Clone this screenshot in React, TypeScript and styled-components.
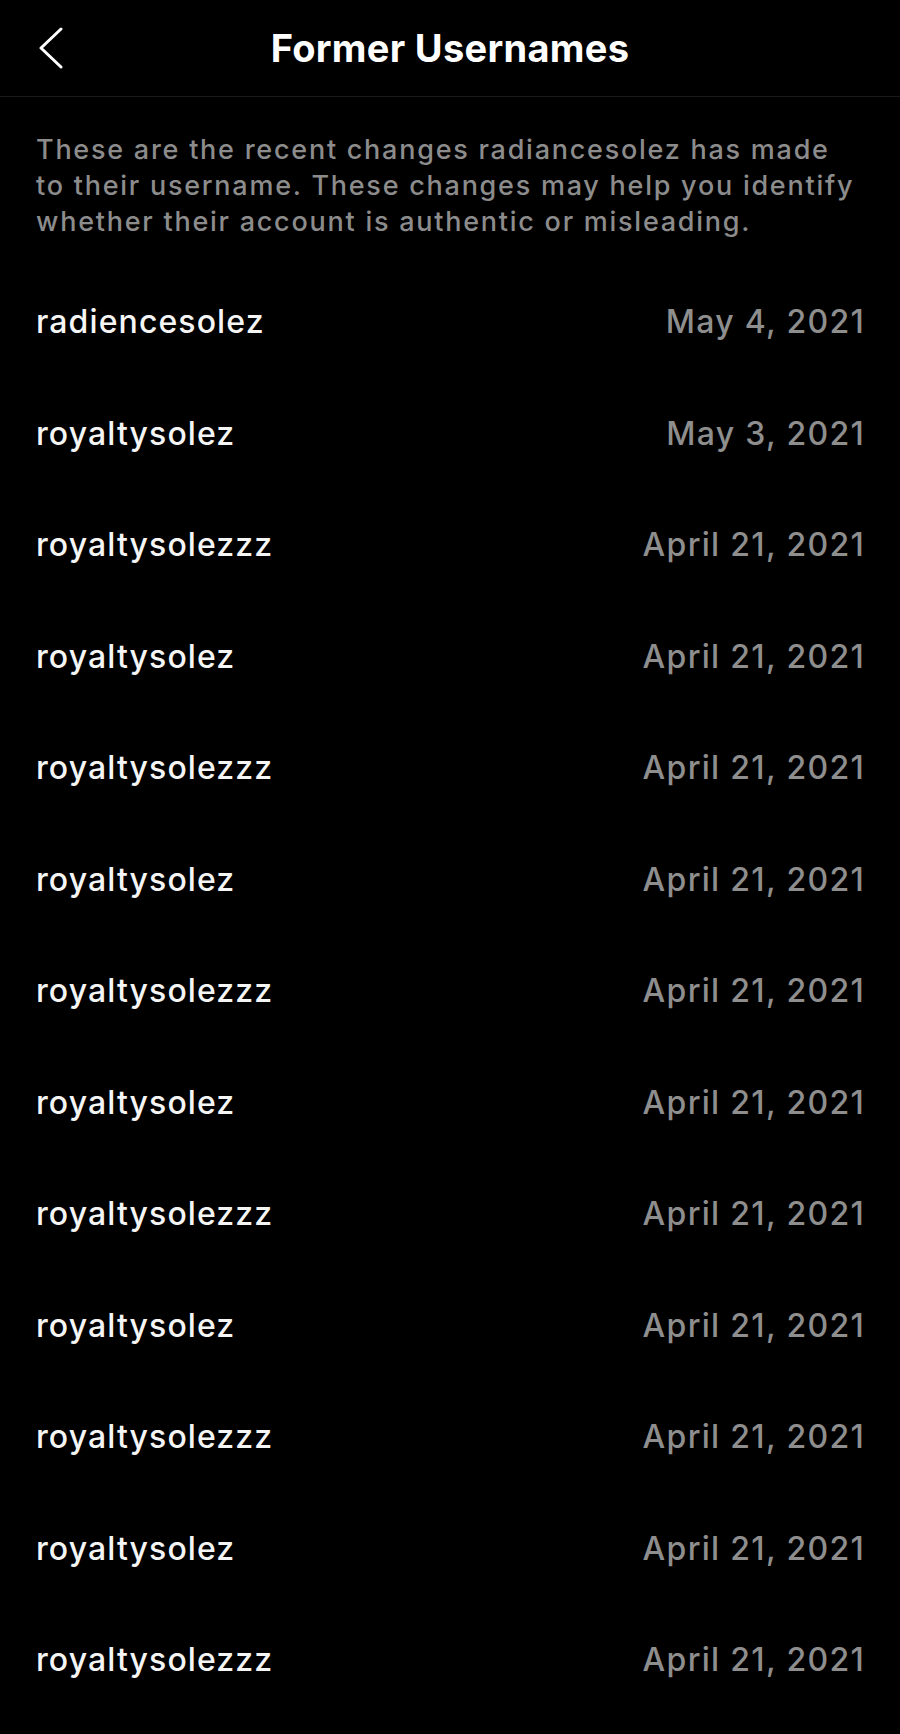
import { FC } from 'react';
import styled, { createGlobalStyle } from 'styled-components';

interface Change {
  username: string;
  date: string;
}

const changes: Change[] = [
  { username: 'radiencesolez', date: 'May 4, 2021' },
  { username: 'royaltysolez', date: 'May 3, 2021' },
  { username: 'royaltysolezzz', date: 'April 21, 2021' },
  { username: 'royaltysolez', date: 'April 21, 2021' },
  { username: 'royaltysolezzz', date: 'April 21, 2021' },
  { username: 'royaltysolez', date: 'April 21, 2021' },
  { username: 'royaltysolezzz', date: 'April 21, 2021' },
  { username: 'royaltysolez', date: 'April 21, 2021' },
  { username: 'royaltysolezzz', date: 'April 21, 2021' },
  { username: 'royaltysolez', date: 'April 21, 2021' },
  { username: 'royaltysolezzz', date: 'April 21, 2021' },
  { username: 'royaltysolez', date: 'April 21, 2021' },
  { username: 'royaltysolezzz', date: 'April 21, 2021' },
];

const GlobalStyle = createGlobalStyle`
  html, body {
    margin: 0;
    padding: 0;
    background: #000;
  }
  body {
    font-family: Inter, 'Liberation Sans', sans-serif;
  }
`;

const Screen = styled.div`
  width: 900px;
  min-height: 1734px;
  background: #000;
  color: #f5f5f5;
`;

const Header = styled.header`
  height: 96px;
  display: grid;
  grid-template-columns: 96px 1fr 96px;
  align-items: center;
  border-bottom: 1px solid #1a1a1a;
`;

const BackButton = styled.button`
  background: none;
  border: 0;
  padding: 0 0 0 38px;
  height: 100%;
  display: flex;
  align-items: center;
  color: #fff;
  cursor: pointer;
`;

const Title = styled.h1`
  margin: 0;
  text-align: center;
  font-size: 38px;
  font-weight: 700;
  letter-spacing: 0.3px;
  color: #fff;
`;

const Intro = styled.p`
  margin: 0;
  padding: 35px 36px 0;
  font-size: 27px;
  font-weight: 500;
  line-height: 36px;
  letter-spacing: 1.75px;
  color: #8c8c8c;
  white-space: nowrap;
`;

const List = styled.ul`
  list-style: none;
  margin: 26px 0 0;
  padding: 0 35px 0 36px;
`;

const Row = styled.li`
  height: 111.5px;
  display: flex;
  align-items: center;
  justify-content: space-between;
`;

const Username = styled.span`
  font-size: 32px;
  font-weight: 500;
  letter-spacing: 1.1px;
  color: #f5f5f5;
`;

const DateText = styled.span`
  font-size: 32px;
  font-weight: 500;
  letter-spacing: 1.3px;
  color: #8e8e8e;
`;

const ChevronLeft: FC = () => (
  <svg width="26" height="42" viewBox="0 0 26 42" fill="none">
    <path
      d="M23 2 L3 21 L23 40"
      stroke="currentColor"
      strokeWidth="3"
      strokeLinecap="round"
      strokeLinejoin="round"
    />
  </svg>
);

const App: FC = () => {
  return (
    <Screen>
      <GlobalStyle />
      <Header>
        <BackButton aria-label="Back">
          <ChevronLeft />
        </BackButton>
        <Title>Former Usernames</Title>
        <span />
      </Header>
      <Intro>
        These are the recent changes radiancesolez has made
        <br />
        to their username. These changes may help you identify
        <br />
        whether their account is authentic or misleading.
      </Intro>
      <List>
        {changes.map((c, i) => (
          <Row key={i}>
            <Username>{c.username}</Username>
            <DateText>{c.date}</DateText>
          </Row>
        ))}
      </List>
    </Screen>
  );
};

export default App;
